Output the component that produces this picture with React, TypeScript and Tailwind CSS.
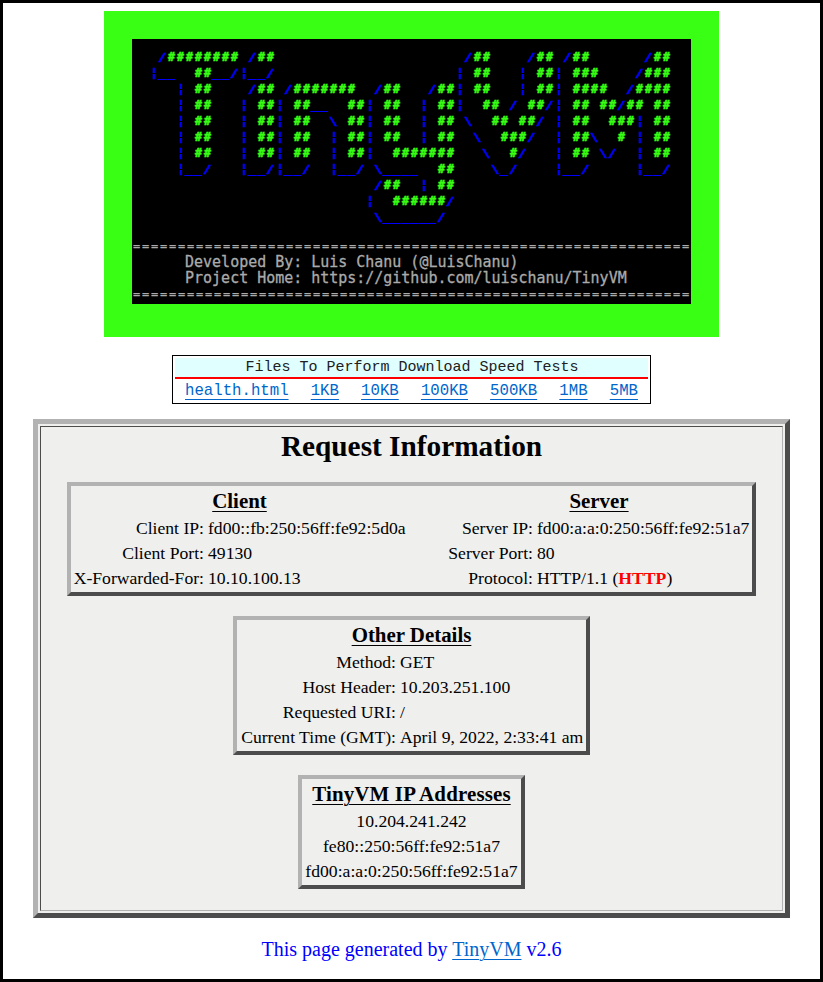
import type { ReactNode } from "react";

const LOGO = [
  "   /######## /##                     /##    /## /##      /##",
  "  ¦__  ##__/¦__/                    ¦ ##   ¦ ##¦ ###    /###",
  "     ¦ ##    /## /#######  /##   /##¦ ##   ¦ ##¦ ####  /####",
  "     ¦ ##   ¦ ##¦ ##__  ##¦ ##  ¦ ##¦  ## / ##/¦ ## ##/## ##",
  "     ¦ ##   ¦ ##¦ ##  \\ ##¦ ##  ¦ ## \\  ## ##/ ¦ ##  ###¦ ##",
  "     ¦ ##   ¦ ##¦ ##  ¦ ##¦ ##  ¦ ##  \\  ###/  ¦ ##\\  # ¦ ##",
  "     ¦ ##   ¦ ##¦ ##  ¦ ##¦  #######   \\  #/   ¦ ## \\/  ¦ ##",
  "     ¦__/   ¦__/¦__/  ¦__/ \\____  ##    \\_/    ¦__/     ¦__/",
  "                           /##  ¦ ##",
  "                          ¦  ######/",
  "                           \\______/",
];

const GLYPH: Record<string, string> = {
  "#": "block text-[#39ff14] font-bold text-[11.5px] tracking-[2.077px] pl-px -mr-px [-webkit-text-stroke:0.5px_#39ff14]",
  "/": "text-[#0000ff] inline-block w-[9px] text-center text-[10px] scale-x-[1.4] [-webkit-text-stroke:0.6px_#0000ff]",
  "\\": "text-[#0000ff] inline-block w-[9px] text-center text-[10px] scale-x-[1.4] [-webkit-text-stroke:0.6px_#0000ff]",
  "_": "block text-[#0000ff] text-[13.3px] tracking-[0.993px] relative -top-px [-webkit-text-stroke:0.5px_#0000ff]",
  "¦": "text-[#0000ff] inline-block w-[10px] text-center font-bold text-[12px] [-webkit-text-stroke:0.6px_#0000ff]",
  " ": "block text-[14.95px]",
};

function LogoLine({ line }: { line: string }) {
  const runs = line.match(/(.)\1*/g) ?? [];
  return (
    <div className="flex h-4 whitespace-pre text-[12px] leading-4">
      {runs.map((run, i) => (
        <span key={i} className="block h-4 shrink-0" style={{ width: run.length * 9 }}>
          <span className={GLYPH[run[0]]}>{run}</span>
        </span>
      ))}
    </div>
  );
}

function Rule() {
  return (
    <div className="h-4 pl-px text-[12px] tracking-[1.776px] [-webkit-text-stroke:0.2px_#aaaaaa]">
      {"=".repeat(62)}
    </div>
  );
}

function Banner() {
  return (
    <div className="mt-2 h-[326px] w-[615px] bg-[#39ff14] p-7">
      <div className="h-[265px] w-[559px] overflow-hidden bg-black pt-[10px] font-['DejaVu_Sans_Mono',monospace]">
        <div className="-ml-px h-[189px]">
          {LOGO.map((line, i) => (
            <LogoLine key={i} line={line} />
          ))}
        </div>
        <div className="whitespace-pre leading-4 text-[#aaaaaa]">
          <Rule />
          <div className="-ml-px text-[14.97px] [-webkit-text-stroke:0.3px_#aaaaaa]">
            {"      Developed By: Luis Chanu (@LuisChanu)\n      Project Home: https://github.com/luischanu/TinyVM"}
          </div>
          <Rule />
        </div>
      </div>
    </div>
  );
}

function Downloads() {
  const files = ["health.html", "1KB", "10KB", "100KB", "500KB", "1MB", "5MB"];
  return (
    <div className="mt-[18px] h-[49px] w-[479px] border border-black p-0.5 font-['Liberation_Mono',monospace]">
      <div className="h-[21px] border-b-2 border-[#ff0000] bg-[#e0ffff] pl-px text-center text-[15px] leading-[19px] text-[#202020]">
        Files To Perform Download Speed Tests
      </div>
      <div className="flex justify-between px-[10px] pt-px text-[15.7px] leading-[22px] text-[#0066cc]">
        {files.map((f) => (
          <a key={f} className="underline decoration-1 underline-offset-[4px]">{f}</a>
        ))}
      </div>
    </div>
  );
}

function Box({ className, children }: { className: string; children: ReactNode }) {
  return (
    <section
      className={`border-4 border-t-[#b2b2b2] border-l-[#b2b2b2] border-r-[#4c4c4c] border-b-[#4c4c4c] ${className}`}
    >
      {children}
    </section>
  );
}

function Title({ className = "", children }: { className?: string; children: ReactNode }) {
  return (
    <h3
      className={`h-[30px] text-center text-[20.9px] font-bold leading-[30px] underline decoration-1 underline-offset-[3px] ${className}`}
    >
      {children}
    </h3>
  );
}

function Rows({ grid, rows }: { grid: string; rows: [string, ReactNode][] }) {
  return (
    <dl className={`grid gap-x-1 leading-[25px] ${grid}`}>
      {rows.map(([label, value]) => (
        <div key={label} className="contents">
          <dt className="whitespace-nowrap text-right">{label}</dt>
          <dd className="whitespace-nowrap">{value}</dd>
        </div>
      ))}
    </dl>
  );
}

export default function App() {
  return (
    <main className="flex h-[982px] w-[823px] flex-col items-center border-[3px] border-black bg-white font-['Liberation_Serif',serif] text-[17.65px] text-black">
      <Banner />
      <Downloads />
      <div className="mt-[15px] h-[499px] w-[757px] border-[5px] border-t-[#b2b2b2] border-l-[#b2b2b2] border-r-[#4c4c4c] border-b-[#4c4c4c] bg-[#efefee] p-0.5">
        <div className="flex h-full flex-col items-center border border-t-[#4c4c4c] border-l-[#4c4c4c] border-r-[#b2b2b2] border-b-[#b2b2b2]">
          <h1 className="h-[55px] text-[29.3px] font-bold leading-[38px]">Request Information</h1>
          <Box className="flex h-[114px] w-[689px] justify-between pl-[2px] pr-[2px]">
            <div className="w-[333px]">
              <Title>Client</Title>
              <Rows
                grid="grid-cols-[131px_198px]"
                rows={[
                  ["Client IP:", "fd00::fb:250:56ff:fe92:5d0a"],
                  ["Client Port:", "49130"],
                  ["X-Forwarded-For:", "10.10.100.13"],
                ]}
              />
            </div>
            <div className="w-[302px]">
              <Title>Server</Title>
              <Rows
                grid="grid-cols-[85px_213px]"
                rows={[
                  ["Server IP:", "fd00:a:a:0:250:56ff:fe92:51a7"],
                  ["Server Port:", "80"],
                  ["Protocol:", <>HTTP/1.1 (<b className="text-[#ff0000]">HTTP</b>)</>],
                ]}
              />
            </div>
          </Box>
          <Box className="mt-5 h-[139px] w-[357px] px-[2px]">
            <Title>Other Details</Title>
            <Rows
              grid="grid-cols-[157px_184px]"
              rows={[
                ["Method:", "GET"],
                ["Host Header:", "10.203.251.100"],
                ["Requested URI:", "/"],
                ["Current Time (GMT):", "April 9, 2022, 2:33:41 am"],
              ]}
            />
          </Box>
          <Box className="mt-5 h-[114px] w-[227px] text-center leading-[25px]">
            <Title className="tracking-[0.16px]">TinyVM IP Addresses</Title>
            <p>10.204.241.242</p>
            <p>fe80::250:56ff:fe92:51a7</p>
            <p>fd00:a:a:0:250:56ff:fe92:51a7</p>
          </Box>
        </div>
      </div>
      <footer className="mt-[19px] text-[20px] leading-[24px] text-[#0000ff]">
        This page generated by{" "}
        <a className="text-[#0066cc] underline decoration-1 underline-offset-[3px]">TinyVM</a> v2.6
      </footer>
    </main>
  );
}
